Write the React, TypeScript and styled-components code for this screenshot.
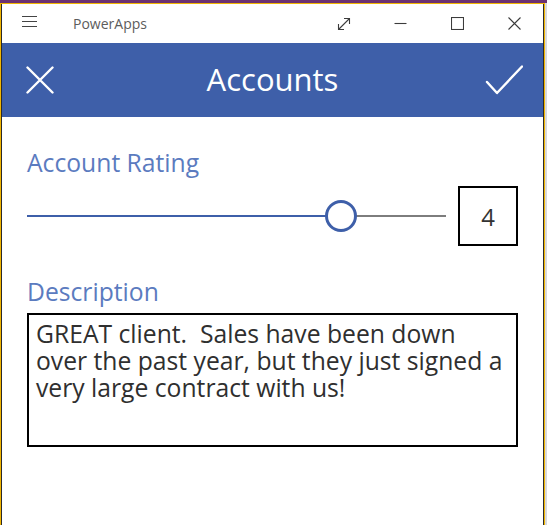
import React from "react";
import styled, { createGlobalStyle } from "styled-components";

const Global = createGlobalStyle`
  html, body { margin: 0; padding: 0; }
  html { background: linear-gradient(#6c3171 0 3px, #d9d9d9 3px); }
  body { font-family: "Open Sans", "Liberation Sans", sans-serif; width: 547px; height: 525px; overflow: hidden; }
`;

const Frame = styled.div`
  margin-top: 3px;
  width: 545px;
  height: 522px;
  box-sizing: border-box;
  border: 1px solid #f1b500;
  border-bottom: none;
  background: #fff;
`;

const Inner = styled.div`
  height: 100%;
  box-sizing: border-box;
  border-left: 1px solid #2a2a2a;
  border-right: 1px solid #2a2a2a;
  display: flex;
  flex-direction: column;
`;

const TitleBar = styled.div`
  height: 39px;
  display: flex;
  align-items: center;
  background: #fff;
`;

const Hamburger = styled.div`
  width: 15px;
  margin: 0 0 4px 20px;
  display: flex;
  flex-direction: column;
  gap: 4px;
  span { display: block; height: 1px; background: #444; }
`;

const AppTitle = styled.div`
  margin-left: 36px;
  font-family: "Open Sans", sans-serif;
  font-size: 14px;
  color: #5c5c5c;
  flex: 1;
`;

const WinButton = styled.div`
  width: 57px;
  height: 39px;
  display: flex;
  align-items: center;
  justify-content: center;
  color: #3c3c3c;
`;

const Header = styled.div`
  height: 74px;
  background: #3e5fa9;
  display: grid;
  grid-template-columns: 1fr auto 1fr;
  align-items: center;
  padding: 0 20px;
`;

const HeaderTitle = styled.div`
  font-size: 31px;
  color: #fff;
  line-height: 1;
  padding-bottom: 2px;
`;

const HeaderIcon = styled.div<{ $end?: boolean }>`
  display: flex;
  justify-self: ${(p) => (p.$end ? "end" : "start")};
  margin-left: ${(p) => (p.$end ? "0" : "4px")};
  color: #fff;
`;

const Content = styled.div`
  padding: 29px 25px 0 25px;
  display: flex;
  flex-direction: column;
`;

const Label = styled.div<{ $gap: number }>`
  font-size: 24.7px;
  line-height: 34px;
  color: #5b7bbf;
  margin-left: 0px;
  margin-bottom: ${(p) => p.$gap}px;
`;

const SliderRow = styled.div`
  display: flex;
  align-items: center;
  gap: 12px;
  height: 60px;
  margin-bottom: 29px;
`;

const Slider = styled.div`
  flex: 1;
  position: relative;
  height: 32px;
  display: flex;
  align-items: center;
`;

const TrackFill = styled.div`
  height: 2px;
  background: #3e5fa9;
`;

const TrackRest = styled.div`
  flex: 1;
  height: 2px;
  background: #7d7d7d;
`;

const Thumb = styled.div`
  position: absolute;
  top: 0;
  width: 32px;
  height: 32px;
  margin-left: -16px;
  box-sizing: border-box;
  border-radius: 50%;
  border: 3px solid #3e5fa9;
  background: #fff;
`;

const ValueBox = styled.div`
  width: 60px;
  height: 60px;
  box-sizing: border-box;
  border: 2px solid #000;
  display: flex;
  align-items: center;
  justify-content: center;
  font-size: 24px;
  color: #333;
`;

const TextBox = styled.div`
  height: 134px;
  box-sizing: border-box;
  border: 2px solid #000;
  padding: 5px 6px 0 7px;
  font-size: 24.7px;
  line-height: 27px;
  color: #2f2f2f;
  white-space: pre-wrap;
`;

const value = 4;
const min = 1;
const max = 5;

export default function App() {
  const pct = ((value - min) / (max - min)) * 100;
  return (
    <>
      <Global />
      <Frame>
        <Inner>
          <TitleBar>
            <Hamburger>
              <span />
              <span />
              <span />
            </Hamburger>
            <AppTitle>PowerApps</AppTitle>
            <WinButton>
              <svg width="14" height="14" viewBox="0 0 14 14" fill="none" stroke="currentColor" strokeWidth="1.1">
                <path d="M1.5 12.5 L12.5 1.5 M7 1.5 H12.5 V7 M1.5 7 V12.5 H7" />
              </svg>
            </WinButton>
            <WinButton>
              <svg width="13" height="13" viewBox="0 0 13 13" fill="none" stroke="currentColor" strokeWidth="1.1">
                <path d="M0.5 6.5 H12.5" />
              </svg>
            </WinButton>
            <WinButton>
              <svg width="13" height="13" viewBox="0 0 13 13" fill="none" stroke="currentColor" strokeWidth="1.1">
                <rect x="0.5" y="0.5" width="12" height="12" />
              </svg>
            </WinButton>
            <WinButton>
              <svg width="13" height="13" viewBox="0 0 13 13" fill="none" stroke="currentColor" strokeWidth="1.1">
                <path d="M0.5 0.5 L12.5 12.5 M12.5 0.5 L0.5 12.5" />
              </svg>
            </WinButton>
          </TitleBar>
          <Header>
            <HeaderIcon>
              <svg width="28" height="28" viewBox="0 0 28 28" fill="none" stroke="currentColor" strokeWidth="2.4" strokeLinecap="round">
                <path d="M1.5 1.5 L26.5 26.5 M26.5 1.5 L1.5 26.5" />
              </svg>
            </HeaderIcon>
            <HeaderTitle>Accounts</HeaderTitle>
            <HeaderIcon $end>
              <svg width="38" height="30" viewBox="0 0 38 30" fill="none" stroke="currentColor" strokeWidth="2.4" strokeLinecap="round" strokeLinejoin="round">
                <path d="M2 17 L12 28 L37 1.5" />
              </svg>
            </HeaderIcon>
          </Header>
          <Content>
            <Label $gap={6}>Account Rating</Label>
            <SliderRow>
              <Slider>
                <TrackFill style={{ width: `${pct}%` }} />
                <TrackRest />
                <Thumb style={{ left: `${pct}%` }} />
              </Slider>
              <ValueBox>{value}</ValueBox>
            </SliderRow>
            <Label $gap={4}>Description</Label>
            <TextBox>{"GREAT client.  Sales have been down over the past year, but they just signed a very large contract with us!"}</TextBox>
          </Content>
        </Inner>
      </Frame>
    </>
  );
}
